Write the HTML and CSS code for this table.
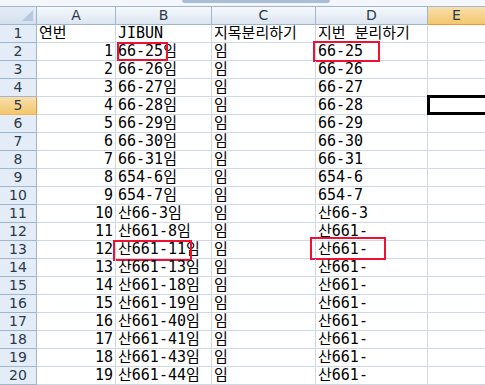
FILE: index.html
```html
<!DOCTYPE html>
<html lang="ko">
<head>
<meta charset="utf-8">
<link rel="stylesheet" href="styles.css">
</head>
<body>
<div class="topbar"><div class="tab"></div></div>
<div class="sheet">
  <div class="corner"><span class="tri"></span></div>
  <div class="ch">A</div><div class="ch">B</div><div class="ch">C</div><div class="ch">D</div><div class="ch sel">E</div>

  <div class="rh">1</div><div class="c">연번</div><div class="c">JIBUN</div><div class="c">지목분리하기</div><div class="c">지번 분리하기</div><div class="c"></div>
  <div class="rh">2</div><div class="c r">1</div><div class="c"><span class="mark m1"></span>66-25임</div><div class="c">임</div><div class="c"><span class="mark m2"></span>66-25</div><div class="c"></div>
  <div class="rh">3</div><div class="c r">2</div><div class="c">66-26임</div><div class="c">임</div><div class="c">66-26</div><div class="c"></div>
  <div class="rh">4</div><div class="c r">3</div><div class="c">66-27임</div><div class="c">임</div><div class="c">66-27</div><div class="c"></div>
  <div class="rh sel">5</div><div class="c r">4</div><div class="c">66-28임</div><div class="c">임</div><div class="c">66-28</div><div class="c active"></div>
  <div class="rh">6</div><div class="c r">5</div><div class="c">66-29임</div><div class="c">임</div><div class="c">66-29</div><div class="c"></div>
  <div class="rh">7</div><div class="c r">6</div><div class="c">66-30임</div><div class="c">임</div><div class="c">66-30</div><div class="c"></div>
  <div class="rh">8</div><div class="c r">7</div><div class="c">66-31임</div><div class="c">임</div><div class="c">66-31</div><div class="c"></div>
  <div class="rh">9</div><div class="c r">8</div><div class="c">654-6임</div><div class="c">임</div><div class="c">654-6</div><div class="c"></div>
  <div class="rh">10</div><div class="c r">9</div><div class="c">654-7임</div><div class="c">임</div><div class="c">654-7</div><div class="c"></div>
  <div class="rh">11</div><div class="c r">10</div><div class="c">산66-3임</div><div class="c">임</div><div class="c">산66-3</div><div class="c"></div>
  <div class="rh">12</div><div class="c r">11</div><div class="c">산661-8임</div><div class="c">임</div><div class="c">산661-</div><div class="c"></div>
  <div class="rh">13</div><div class="c r">12</div><div class="c"><span class="mark m3"></span>산661-11임</div><div class="c">임</div><div class="c"><span class="mark m4"></span>산661-</div><div class="c"></div>
  <div class="rh">14</div><div class="c r">13</div><div class="c">산661-13임</div><div class="c">임</div><div class="c">산661-</div><div class="c"></div>
  <div class="rh">15</div><div class="c r">14</div><div class="c">산661-18임</div><div class="c">임</div><div class="c">산661-</div><div class="c"></div>
  <div class="rh">16</div><div class="c r">15</div><div class="c">산661-19임</div><div class="c">임</div><div class="c">산661-</div><div class="c"></div>
  <div class="rh">17</div><div class="c r">16</div><div class="c">산661-40임</div><div class="c">임</div><div class="c">산661-</div><div class="c"></div>
  <div class="rh">18</div><div class="c r">17</div><div class="c">산661-41임</div><div class="c">임</div><div class="c">산661-</div><div class="c"></div>
  <div class="rh">19</div><div class="c r">18</div><div class="c">산661-43임</div><div class="c">임</div><div class="c">산661-</div><div class="c"></div>
  <div class="rh">20</div><div class="c r">19</div><div class="c">산661-44임</div><div class="c">임</div><div class="c">산661-</div><div class="c"></div>
</div>
</body>
</html>
```

FILE: styles.css
```css
* { box-sizing: border-box; }
html, body { margin: 0; padding: 0; background: #fff; overflow: hidden; }
body { width: 485px; height: 385px; }

.topbar {
  height: 7px;
  background: #f3f6fa;
  border-bottom: 1px solid #9eb6ce;
  display: flex;
  padding-left: 182px;
}
.tab {
  width: 148px;
  height: 3px;
  background: #a9bfd8;
  border-bottom-left-radius: 3px;
  border-bottom-right-radius: 3px;
}

.sheet {
  display: grid;
  grid-template-columns: 37px 79px 96px 104px 112px 57px;
  grid-auto-rows: 18px;
  width: 485px;
  font-family: "DejaVu Sans Mono", "Noto Sans CJK KR", monospace;
  font-size: 15px;
  color: #000;
}
.sheet > :nth-child(6n) { border-right: 0; }

.corner {
  position: relative;
  background: linear-gradient(#e4ecf7, #d5e0ef);
  border-right: 1px solid #9eb6ce;
  border-bottom: 1px solid #9eb6ce;
}
.tri {
  position: absolute;
  right: 3px;
  bottom: 3px;
  width: 0;
  height: 0;
  border-left: 11px solid transparent;
  border-bottom: 11px solid #b6c9de;
}

.ch {
  background: linear-gradient(#f6f9fc, #dce5f1);
  border-right: 1px solid #9eb6ce;
  border-bottom: 1px solid #9eb6ce;
  text-align: center;
  font-family: "DejaVu Sans", sans-serif;
  font-size: 14px;
  line-height: 17px;
  color: #2b3a4a;
}
.ch.sel {
  background: linear-gradient(#f9dfae, #f3c76c);
  border-bottom: 1px solid #f29536;
}

.rh {
  background: #e4ecf7;
  border-right: 1px solid #9eb6ce;
  border-bottom: 1px solid #9eb6ce;
  text-align: center;
  font-family: "DejaVu Sans", sans-serif;
  font-size: 14px;
  line-height: 17px;
  color: #2b3a4a;
}
.rh.sel {
  background: linear-gradient(#f9dfae, #f3c76c);
  border-right: 1px solid #f29536;
  border-bottom: 1px solid #f2b45a;
}

.c {
  position: relative;
  border-right: 1px solid #d0d7e5;
  border-bottom: 1px solid #d0d7e5;
  padding: 0 2px;
  line-height: 17px;
  white-space: nowrap;
}
.c.r { text-align: right; }

.active::after {
  content: "";
  position: absolute;
  left: -1px;
  top: -2px;
  right: 0;
  bottom: -1px;
  border: 3px solid #000;
  border-right: 0;
}

.mark {
  position: absolute;
  border: 2px solid #ee1133;
}
.m1 { left: 1px; top: -1px; width: 51px; height: 19px; }
.m2 { left: -3px; top: -2px; width: 67px; height: 21px; }
.m3 { left: -3px; top: -1px; width: 79px; height: 21px; }
.m4 { left: -6px; top: -4px; width: 76px; height: 23px; }
```
